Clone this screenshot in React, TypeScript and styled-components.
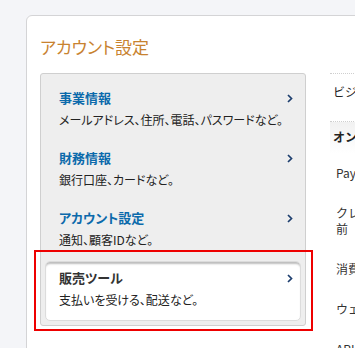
import styled, { createGlobalStyle } from 'styled-components';

const GlobalStyle = createGlobalStyle`
  html, body {
    margin: 0;
    padding: 0;
    background: #f4f5f8;
    overflow: hidden;
  }
  body {
    font-family: "Noto Sans CJK JP", "Liberation Sans", sans-serif;
    color: #333;
  }
`;

interface IItem {
  id: number;
  label: string;
  desc: string;
}

const items: IItem[] = [
  { id: 1, label: '事業情報', desc: 'メールアドレス、住所、電話、パスワードなど。' },
  { id: 2, label: '財務情報', desc: '銀行口座、カードなど。' },
  { id: 3, label: 'アカウント設定', desc: '通知、顧客IDなど。' },
  { id: 4, label: '販売ツール', desc: '支払いを受ける、配送など。' },
];

const Chevron = () => (
  <svg width="6" height="9" viewBox="0 0 6 9">
    <path d="M1 1 L4.5 4.5 L1 8" fill="none" stroke="#1d3e6e" strokeWidth="1.7" />
  </svg>
);

const App = () => {
  const selected = 4;
  return (
    <Page>
      <GlobalStyle />
      <Card>
        <Title>アカウント設定</Title>
        <Columns>
          <Panel>
            {items.map((item) => (
              <Item key={item.id} $selected={item.id === selected}>
                <ItemText>
                  <ItemLabel $selected={item.id === selected}>{item.label}</ItemLabel>
                  <ItemDesc>{item.desc}</ItemDesc>
                </ItemText>
                <ArrowBox>
                  <Chevron />
                </ArrowBox>
              </Item>
            ))}
          </Panel>
          <Side>
            <SideHead>ビジネスプロフィール</SideHead>
            <SideHead $active>オンライン決済の設定</SideHead>
            <SideRow>PayPalボタン</SideRow>
            <SideRow>
              クレジットカード明細の名
              <br />
              前
            </SideRow>
            <SideRow>消費税の設定</SideRow>
            <SideRow>ウェブサイトの設定</SideRow>
            <SideRow>API アクセス</SideRow>
          </Side>
        </Columns>
      </Card>
    </Page>
  );
};

const Page = styled.div`
  height: 348px;
  padding: 15px 0 0 26px;
  box-sizing: border-box;
  overflow: hidden;
`;

const Card = styled.section`
  width: 440px;
  height: 400px;
  background: #fff;
  border: 1px solid #d4d4d6;
  border-radius: 6px 0 0 0;
  padding: 21px 0 0 13px;
  box-sizing: border-box;
`;

const Title = styled.h1`
  margin: 0 0 16px;
  font-size: 17px;
  line-height: 20px;
  font-weight: normal;
  color: #c8822f;
  font-feature-settings: "palt";
`;

const Columns = styled.div`
  display: flex;
  align-items: flex-start;
  gap: 24px;
`;

const Panel = styled.div`
  flex-shrink: 0;
  width: 266px;
  box-sizing: border-box;
  background: #eeeeee;
  border: 1px solid #cfcfcf;
  border-radius: 3px;
  padding: 7px 4px 4px 4px;
  display: flex;
  flex-direction: column;
`;

const Item = styled.div<{ $selected: boolean }>`
  position: relative;
  display: flex;
  align-items: flex-start;
  height: 60px;
  box-sizing: border-box;
  padding: 6px 7px 0 13px;
  border-radius: 5px;
  background: ${(p) => (p.$selected ? '#fff' : 'transparent')};
  border: 1px solid ${(p) => (p.$selected ? '#dcdcdc' : 'transparent')};
  box-shadow: ${(p) => (p.$selected ? 'inset 0 3px 2px -1px #bdbdbd' : 'none')};

  ${(p) =>
    p.$selected &&
    `
    &::after {
      content: '';
      position: absolute;
      top: -12px;
      left: -12px;
      right: -13px;
      bottom: -11px;
      border: 2px solid #ee0000;
      pointer-events: none;
    }
  `}
`;

const ItemText = styled.div`
  flex: 1;
  display: flex;
  flex-direction: column;
  gap: 2px;
`;

const ItemLabel = styled.div<{ $selected: boolean }>`
  font-size: 13px;
  line-height: 20px;
  font-weight: bold;
  color: ${(p) => (p.$selected ? '#333' : '#0b6aab')};
  font-feature-settings: "palt";
`;

const ItemDesc = styled.div`
  font-size: 12px;
  line-height: 20px;
  color: #222;
  font-feature-settings: "palt";
  white-space: nowrap;
`;

const ArrowBox = styled.div`
  height: 20px;
  display: flex;
  align-items: center;
`;

const Side = styled.div`
  flex-shrink: 0;
  width: 120px;
  display: flex;
  flex-direction: column;
`;

const SideHead = styled.div<{ $active?: boolean }>`
  border-top: 1px dotted #cfcfcf;
  font-size: 12px;
  line-height: 16px;
  font-weight: ${(p) => (p.$active ? 'bold' : 'normal')};
  white-space: nowrap;
  padding: ${(p) => (p.$active ? '7px 0 8px 3px' : '10px 0 21px 3px')};
  background: ${(p) => (p.$active ? 'linear-gradient(#f1f1f1, #fff)' : 'transparent')};
  color: #222;
`;

const SideRow = styled.div`
  font-size: 12px;
  line-height: 16px;
  padding: 12px 0 12px 6px;
  white-space: nowrap;
  color: #333;
`;

export default App;
